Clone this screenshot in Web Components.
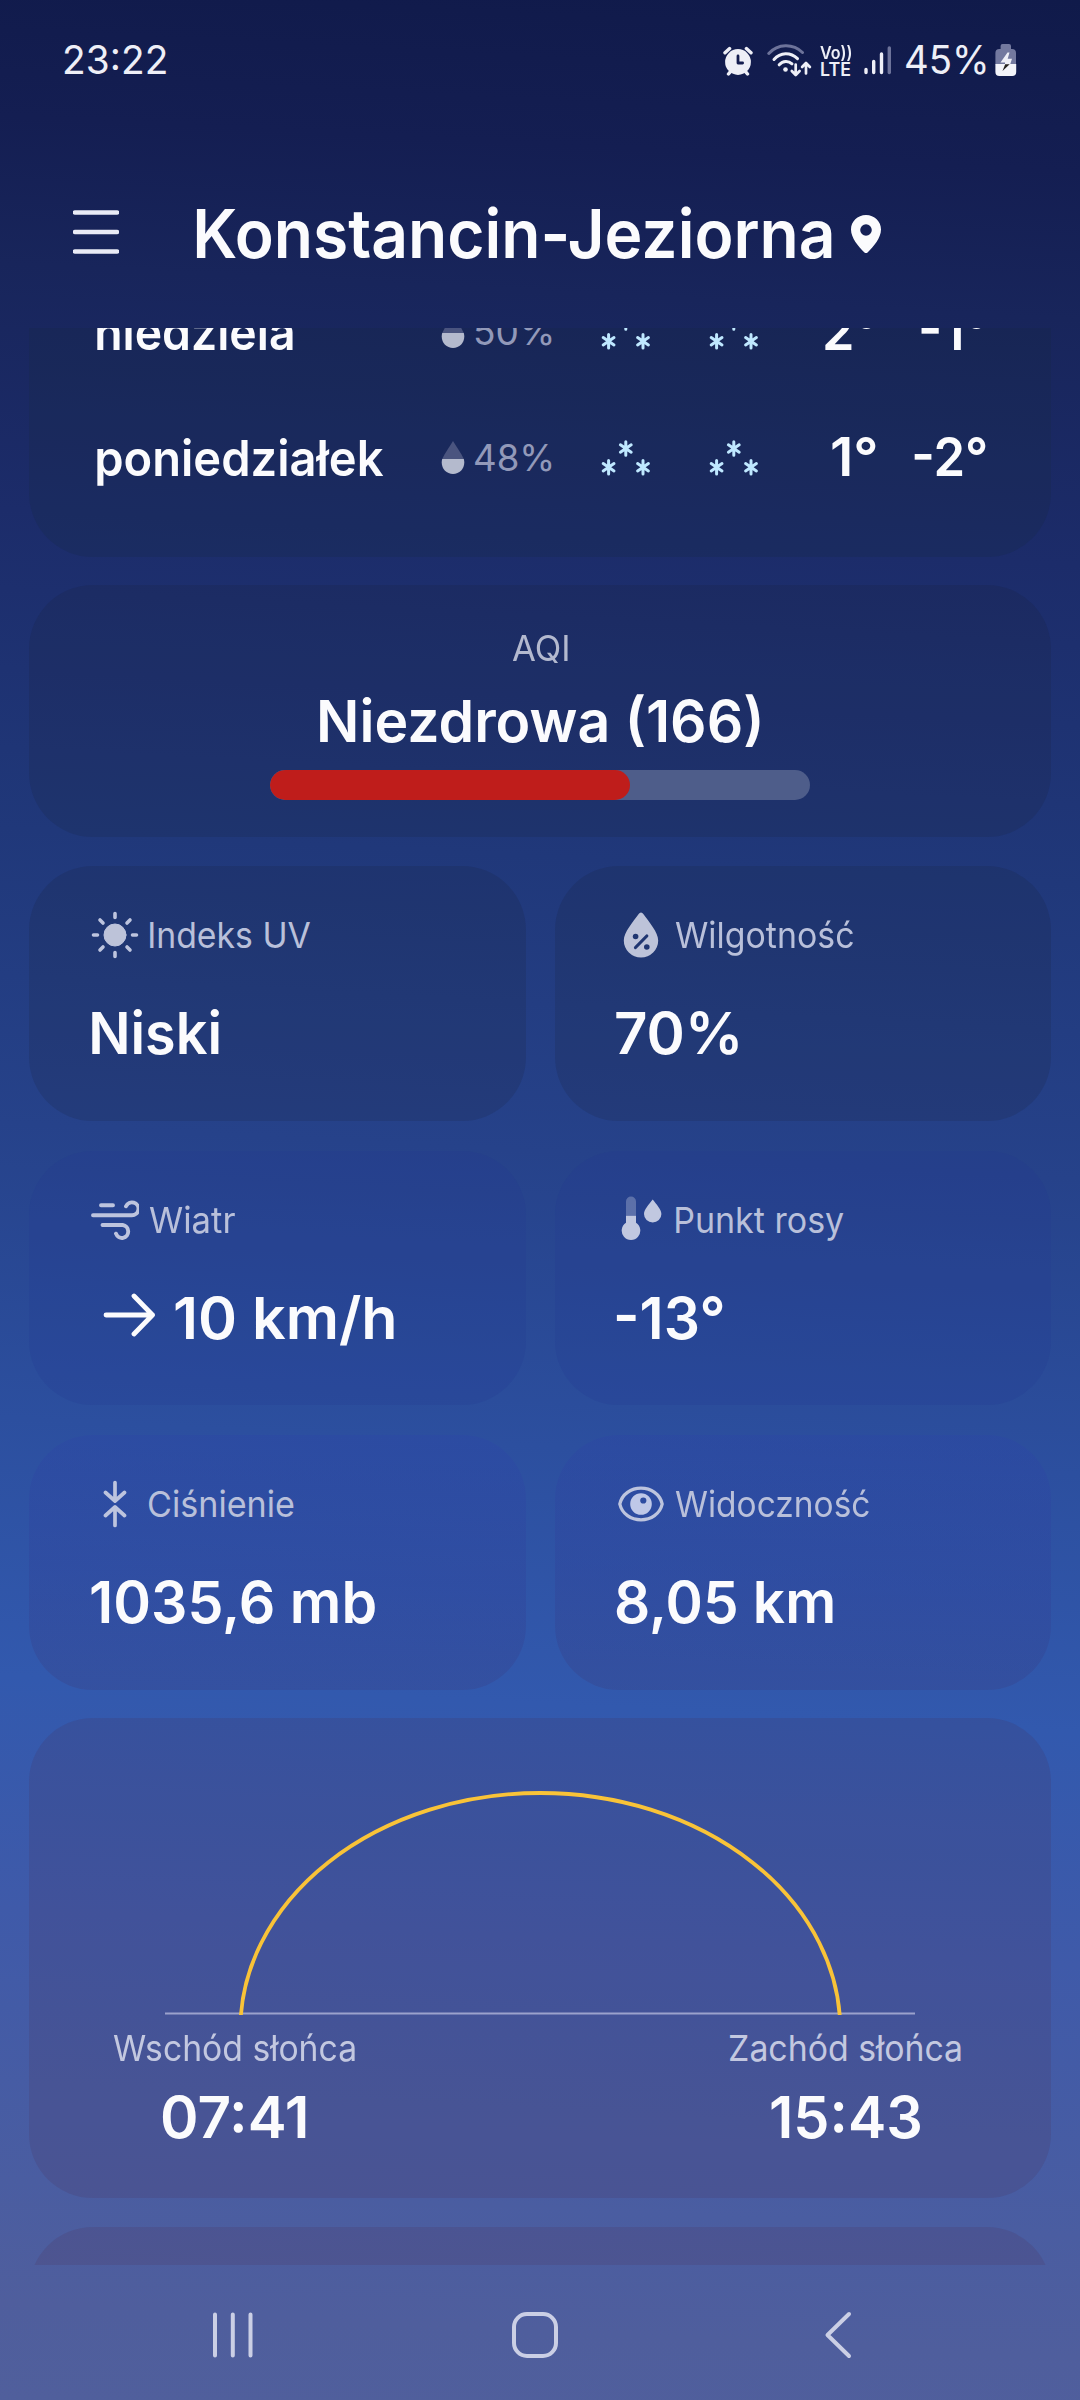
<!DOCTYPE html>
<html lang="pl">
<head>
<meta charset="utf-8">
<title>Pogoda</title>
<style>
html,body{margin:0;padding:0;height:2400px;overflow:hidden}
body{font-family:Inter,"Noto Sans",sans-serif;color:#fbfbfd}
</style>
</head>
<body>
<weather-app></weather-app>
<script>
const define = (name, html, setup) => customElements.define(name, class extends HTMLElement {
  connectedCallback() {
    if (this.shadowRoot) return;
    const root = this.attachShadow({ mode: 'open' });
    const tpl = document.createElement('template');
    tpl.innerHTML = html;
    root.append(tpl.content.cloneNode(true));
    if (setup) setup(this, root);
  }
});

/* A single line whose box is exactly its cap height and whose ink spans w pixels. */
const ctx = document.createElement('canvas').getContext('2d');
define('fit-text', `
<style>
:host{display:block;flex:none;white-space:nowrap;line-height:.727}
span{display:inline-block;transform-origin:0 0;vertical-align:top}
</style><span><slot></slot></span>`, (el, root) => {
  const size = +el.getAttribute('size'), w = +el.getAttribute('w');
  const weight = el.getAttribute('weight') || 400;
  ctx.font = `${weight} ${size}px Inter`;
  const m = ctx.measureText(el.textContent);
  const k = w / (m.actualBoundingBoxLeft + m.actualBoundingBoxRight);
  el.style.cssText += `;font-size:${size}px;font-weight:${weight};width:${w}px;height:${size * .727}px`;
  root.querySelector('span').style.transform = `translateX(${m.actualBoundingBoxLeft * k}px) scaleX(${k})`;
});

define('status-bar', `
<style>
:host{display:flex;height:120px;align-items:center;padding:0 63px 0 65px;box-sizing:border-box;color:#eeeff7}
.sp{flex:1}
svg{display:block;flex:none}
.lte{display:flex;flex-direction:column;gap:4px;width:32px;margin:3px 12px 0 8px}
</style>
<fit-text size="40" w="101">23:22</fit-text>
<span class="sp"></span>
<svg width="30" height="30" viewBox="0 0 30 30" style="margin:2px 14px 0 0"><circle cx="15" cy="16" r="12.9" fill="#eeeff7"/><path d="M15 10v7h4.6" fill="none" stroke="#141d50" stroke-width="2.8" stroke-linecap="round" stroke-linejoin="round"/><path d="M2 6.8l4.6-4.2M28 6.8l-4.6-4.2M5.5 28l3-3.6M24.5 28l-3-3.6" stroke="#eeeff7" stroke-width="3.4" stroke-linecap="round"/></svg>
<svg width="45" height="33" viewBox="0 0 45 33" fill="none" stroke="#eeeff7" stroke-width="3" stroke-linecap="round" stroke-linejoin="round"><path d="M1.8 9.5C11-.6 26-.6 35.500 8.500" stroke="#6d739a"/><path d="M7 15.500c6.500-7.600 16.500-7.600 23.500-.8M12.200 20.800c3.800-4.300 9.200-4.300 12.800-1"/><circle cx="18.500" cy="25.500" r="2.300" fill="#eeeff7" stroke="none"/><path d="M28.700 20.500v10M24.800 27l3.900 4 3.900-4M39 29.500v-10M35.100 23l3.900-4 3.900 4" stroke-width="2.700"/></svg>
<div class="lte"><fit-text size="17.5" weight="600" w="31">Vo))</fit-text><fit-text size="18" weight="600" w="29" style="margin-left:1px">LTE</fit-text></div>
<svg width="28" height="30" viewBox="0 0 28 30" stroke="#eeeff7" stroke-width="3.400" stroke-linecap="round"><path d="M2 24.500v3M9.700 16.500v11M17.500 9v18.500"/><path d="M25.300 3v24.500" stroke="#6d739a"/></svg>
<fit-text size="39.500" w="80" style="margin:0 9px 0 14px">45%</fit-text>
<svg width="22" height="32" viewBox="0 0 22 32"><path d="M7.500 0h6.500a2 2 0 0 1 2 2v3h1a4 4 0 0 1 4 4v11.500H.4V9a4 4 0 0 1 4-4h1.200V2a2 2 0 0 1 1.900-2z" fill="#73799f"/><path d="M.4 20h20.800v8a4 4 0 0 1-4 4H4.400a4 4 0 0 1-4-4z" fill="#f3f4fa"/><path d="M12.500 8.500L5.500 18.500h4.500v1.700h5.200L17 14.800h-4.300l1.800-6.300z" fill="#eeeff7"/><path d="M10.200 20.200L7.500 27l7.200-6.800z" fill="#25221f"/></svg>`);

define('city-header', `
<style>
:host{display:flex;height:208px;box-sizing:border-box;align-items:center;padding:20px 0 0 73px}
svg{display:block;flex:none}
.menu{margin:-4px 76.500px 0 0}.pin{margin:-1px 0 0 19.500px}
</style>
<svg class="menu" width="46" height="46" viewBox="0 0 46 46" stroke="#e9ebf6" stroke-width="4.400" stroke-linecap="round"><path d="M2 3.500h42M2 23h42M2 42.500h42"/></svg>
<slot></slot>
<svg class="pin" width="30" height="38" viewBox="0 0 30 38"><path fill="#fbfbfd" fill-rule="evenodd" d="M15 0C6.500 0 0 6.500 0 14.500 0 23 7.500 31.500 13.200 37.200a2.500 2.500 0 0 0 3.600 0C22.500 31.500 30 23 30 14.500 30 6.500 23.500 0 15 0zM15 9.200a5.800 5.800 0 1 1 0 11.600 5.800 5.800 0 0 1 0-11.600z"/></svg>`);

define('glass-card', `
<style>
:host{display:block;box-sizing:border-box;flex:none;border-radius:64px;background:var(--card,rgba(22,32,50,.16))}
</style><slot></slot>`);

define('snow-icon', `
<style>:host{display:block}svg{display:block}</style>
<svg width="50" height="40" viewBox="0 0 50 40" stroke="#bfe8ff" stroke-width="3" stroke-linecap="round"><defs><path id="f" d="M0-6.700V6.700M-5.400-3.700L5.400 3.700M5.400-3.700L-5.400 3.700"/></defs><use href="#f" x="24.800" y="11.500"/><use href="#f" x="7.600" y="30.300"/><use href="#f" x="42" y="30.300"/></svg>`);

define('forecast-row', `
<style>
:host{display:grid;height:40px;align-items:end;grid-template-columns:344px 34px 126px 108px 60px 107px 109.500px}
.drop{display:block;margin-bottom:2.500px}
::slotted([slot=rain]){color:#9299b9;margin-bottom:5px}
::slotted([slot=hi]),::slotted([slot=lo]){justify-self:end}
</style>
<slot name="day"></slot>
<svg class="drop" width="24" height="33" viewBox="0 0 24 33"><path d="M12 0L20.500 13.500 22.800 18H1.200L3.500 13.500z" fill="#4a547f"/><path d="M1.200 18h21.600C25 26 19.500 33 12 33S-1 26 1.200 18z" fill="#b4bacd"/></svg>
<slot name="rain"></slot>
<snow-icon></snow-icon><snow-icon></snow-icon>
<slot name="hi"></slot>
<slot name="lo"></slot>`);

define('aqi-card', `
<style>
:host{display:block;margin-top:28px}
glass-card{height:252px}
.c{display:flex;flex-direction:column;align-items:center;padding-top:49.500px}
.l{color:#b3b9cf}
.bar{width:540px;height:30px;border-radius:15px;background:#4e5d8a;margin-top:27.500px;overflow:hidden}
.bar i{display:block;width:360px;height:30px;border-radius:15px;background:#bf1d1b}
</style>
<glass-card><div class="c"><fit-text class="l" size="36" w="56">AQI</fit-text>
<fit-text size="58" weight="600" w="440" style="margin-top:39.500px">Niezdrowa (166)</fit-text>
<div class="bar"><i></i></div></div></glass-card>`);

const icons = {
  sun: '<circle cx="24" cy="24" r="11" fill="#bdc3d9"/><path stroke-width="3.600" d="M24 2.500v4M24 41.500v4M2.500 24h4M41.500 24h4M9 9l3 3M36 36l3 3M39 9l-3 3M12 36l-3 3"/>',
  humidity: '<mask id="m"><rect width="48" height="48" fill="#fff"/><g stroke="#000" fill="#000"><circle cx="18.600" cy="25.500" r="2.800" stroke="none"/><circle cx="29.800" cy="36" r="2.800" stroke="none"/><path d="M18.500 36.500L29.800 25" stroke-width="3.200"/></g></mask><path mask="url(#m)" stroke="none" fill="#bdc3d9" d="M24 1.500c1 0 1.700.8 2.300 1.600C32 11 41.200 21.500 41.200 29.500a17.200 17 0 0 1-34.400 0C6.800 21.500 16 11 21.700 3.100c.6-.8 1.300-1.600 2.300-1.600z"/>',
  wind: '<path stroke-width="3.900" d="M10 10.300h12M2 20.200h38.700a6.500 6.400 0 1 0-5.700-9M11.500 30h20.200a6.300 6.500 0 1 1-6.700 8.700"/>',
  dew: '<path d="M9 20.700V6.500a5 5 0 0 1 10 0v14.200z" fill="#fff" fill-opacity=".25" stroke="none"/><path d="M9 20.700h10v7.100a9.300 9.300 0 1 1-10 0z" fill="#c1c8e0" stroke="none"/><path d="M35.700 4.500C39.500 9.500 44.400 14.500 44.400 19a8.700 8.500 0 0 1-17.400 0c0-4.500 4.900-9.500 8.700-14.500z" fill="#c1c8e0" stroke="none"/>',
  pressure: '<path stroke-width="3.700" d="M24 2.500v18M14.500 12.500L24 21l9.500-8.500M24 45.500v-18M14.500 35.500L24 27l9.500 8.500"/>',
  eye: '<path stroke-width="3.300" d="M2.800 24C5 14 14 8.200 24 8.200S43 14 45.200 24C43 34 34 39.800 24 39.800S5 34 2.800 24z"/><path fill="#bfc8e8" stroke="none" fill-rule="evenodd" d="M24 13.200a10.800 10.800 0 1 0 0 21.600 10.800 10.800 0 0 0 0-21.600zM26.300 17.400a3.100 3.100 0 1 1 0 6.200 3.100 3.100 0 0 1 0-6.200z"/>'
};
define('metric-card', `
<style>
:host{display:block}
glass-card{height:254.500px}
.in{padding:44.500px 0 0 62px}
.row{display:flex;align-items:center;gap:10px;height:48px;color:#b9c0da}
svg{display:block;fill:none;stroke:#bdc4de;stroke-linecap:round;stroke-linejoin:round}
::slotted([slot=label]){margin-top:1.500px}
.val{display:flex;align-items:center;margin-top:54px;height:42px}
</style>
<glass-card><div class="in"><div class="row"><svg width="48" height="48" viewBox="0 0 48 48"></svg><slot name="label"></slot></div>
<div class="val"><slot></slot></div></div></glass-card>`, (el, root) => {
  root.querySelector('svg').innerHTML = icons[el.getAttribute('icon')];
});

define('wind-arrow', `
<style>:host{display:block;margin:-6px 19.500px 0 12px}svg{display:block}</style>
<svg width="52" height="46" viewBox="0 0 52 46" fill="none" stroke="#fbfbfd" stroke-width="4.800" stroke-linecap="round" stroke-linejoin="round"><path d="M3 23h46.500M31 4l18.500 19L31 42"/></svg>`);

define('sun-card', `
<style>
:host{display:block;margin-top:28.500px}
glass-card{height:480px}
.in{display:flex;flex-direction:column;align-items:center;padding-top:72px}
svg{display:block}
.f{align-self:stretch;display:flex;justify-content:space-between;padding:19px 90px 0 84px}
.f div{display:flex;flex-direction:column;align-items:center;gap:35px}
.l{color:#c3c8e0}
</style>
<glass-card><div class="in">
<svg width="750" height="226" viewBox="0 0 750 226" fill="none"><clipPath id="c"><path d="M0 0h750v225H0z"/></clipPath><path d="M0 223.500h750" stroke="#9ba2cc" stroke-width="2"/><ellipse cx="375.300" cy="240" rx="300" ry="237" stroke="#f9c338" stroke-width="3.800" clip-path="url(#c)"/></svg>
<div class="f"><div><fit-text class="l" size="36" w="242">Wschód słońca</fit-text><fit-text size="58" weight="600" w="144">07:41</fit-text></div>
<div><fit-text class="l" size="36" w="231">Zachód słońca</fit-text><fit-text size="58" weight="600" w="149">15:43</fit-text></div></div>
</div></glass-card>`);

define('nav-bar', `
<style>
:host{display:flex;align-items:center;height:135px;box-sizing:border-box;padding:5px 0 0 212px}
svg{display:block;fill:none;stroke:#cbcfe5;stroke-width:4;stroke-linecap:round;stroke-linejoin:round}
</style>
<svg width="42" height="50" viewBox="0 0 42 50"><path d="M3 4.500v41M20.800 4.500v41M38.500 4.500v41"/></svg>
<svg width="50" height="50" viewBox="0 0 50 50" style="margin:0 263px 0 256px"><rect x="4" y="4" width="42" height="42" rx="13"/></svg>
<svg width="30" height="50" viewBox="0 0 30 50"><path d="M26 4L4.500 25l21.500 21"/></svg>`);

define('weather-app', `
<style>
:host{display:flex;flex-direction:column;width:1080px;height:2400px;overflow:hidden;
background:linear-gradient(183deg,#101a4a 0%,#141e52 7%,#18255b 13%,#1c2c6a 23%,#20387a 36%,#26428a 48%,#2c4f9f 60%,#3259ae 70.500%,#3f5aa9 80%,#4a5da1 91%,#4f5e9d 96%,#505f9c 100%)}
.scroll{height:1937px;overflow:hidden;padding:0 29px;flex:none}
.fc{margin-top:-100px;height:329px;display:flex;flex-direction:column;justify-content:flex-end;gap:86px;padding:0 0 80.500px 68px;--card:rgba(24,40,66,.22)}
.grid{display:grid;grid-template-columns:497px 496px;gap:30px 29px;margin-top:29px}
.r2{--card:rgba(36,54,146,.2)}
.r3{--card:linear-gradient(183deg,rgba(44,64,172,.24),rgba(48,60,150,.28) 55%,rgba(64,40,90,.17))}
sun-card,.last{--card:rgba(76,36,62,.14)}
.last{margin-top:28.500px;height:300px}
</style>
<status-bar></status-bar>
<city-header><fit-text size="67.500" weight="600" w="636">Konstancin-Jeziorna</fit-text></city-header>
<div class="scroll">
<glass-card class="fc">
<forecast-row><fit-text slot="day" size="50" weight="600" w="196">niedziela</fit-text><fit-text slot="rain" size="37" w="77">50%</fit-text><fit-text slot="hi" size="53.500" weight="600" w="51">2°</fit-text><fit-text slot="lo" size="53.500" weight="600" w="65">-1°</fit-text></forecast-row>
<forecast-row><fit-text slot="day" size="50" weight="600" w="287">poniedziałek</fit-text><fit-text slot="rain" size="37" w="77">48%</fit-text><fit-text slot="hi" size="53.500" weight="600" w="44">1°</fit-text><fit-text slot="lo" size="53.500" weight="600" w="72">-2°</fit-text></forecast-row>
</glass-card>
<aqi-card></aqi-card>
<div class="grid">
<metric-card icon="sun"><fit-text slot="label" size="36" w="160" style="margin-left:1px">Indeks UV</fit-text><fit-text size="58" weight="600" w="127" style="margin-left:1px">Niski</fit-text></metric-card>
<metric-card icon="humidity"><fit-text slot="label" size="36" w="178">Wilgotność</fit-text><fit-text size="58" weight="600" w="122" style="margin-left:-1px">70%</fit-text></metric-card>
<metric-card class="r2" icon="wind"><fit-text slot="label" size="36" w="86">Wiatr</fit-text><wind-arrow></wind-arrow><fit-text size="58" weight="600" w="219">10 km/h</fit-text></metric-card>
<metric-card class="r2" icon="dew"><fit-text slot="label" size="36" w="168" style="margin-left:1px">Punkt rosy</fit-text><fit-text size="58" weight="600" w="107" style="margin-left:-1px">-13°</fit-text></metric-card>
<metric-card class="r3" icon="pressure"><fit-text slot="label" size="36" w="145">Ciśnienie</fit-text><fit-text size="58" weight="600" w="284">1035,6 mb</fit-text></metric-card>
<metric-card class="r3" icon="eye"><fit-text slot="label" size="36" w="194">Widoczność</fit-text><fit-text size="58" weight="600" w="217" style="margin-left:-1px">8,05 km</fit-text></metric-card>
</div>
<sun-card></sun-card>
<glass-card class="last"></glass-card>
</div>
<nav-bar></nav-bar>`);
</script>
</body>
</html>
